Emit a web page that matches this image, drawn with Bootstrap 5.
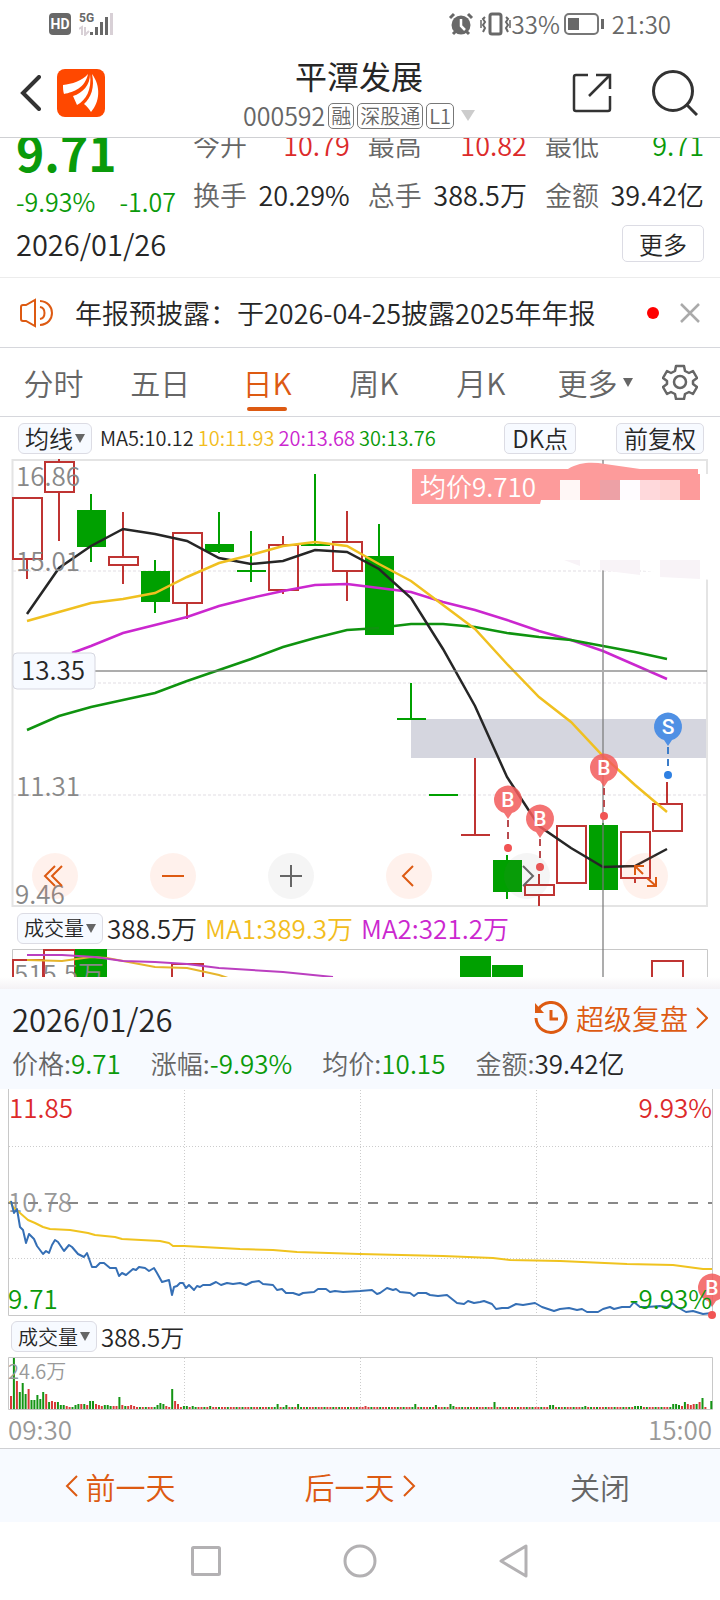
<!DOCTYPE html>
<html lang="zh-CN">
<head>
<meta charset="utf-8">
<meta name="viewport" content="width=device-width, initial-scale=1">
<title>平潭发展 000592</title>
<link href="https://cdn.jsdelivr.net/npm/bootstrap@5.3.0/dist/css/bootstrap.min.css" rel="stylesheet">
<style>
  :root { --up:#dc2a2a; --down:#0a9a0a; --brand:#dd5a12; --ink:#262626; --muted-ink:#666; --line:#d6d7dc; --tint:#f7faff; }
  body { font-family:"Noto Sans CJK SC",sans-serif; font-weight:350; color:var(--ink); background:#fff; line-height:1; overflow-x:hidden; }
  button, select { font-family:inherit; font-weight:inherit; color:inherit; }
  svg { display:block; flex:none; }
  .plain { border:0; background:none; padding:0; }
  .c-up { color:var(--up); } .c-down { color:var(--down); } .c-brand { color:var(--brand); } .c-muted { color:var(--muted-ink); }
  .c-y { color:#f2bd1d; } .c-m { color:#cb27cf; }
  .f20 { font-size:20px; } .f24 { font-size:24px; } .f25 { font-size:25px; } .f26 { font-size:26px; } .f27 { font-size:27px; } .f28 { font-size:28px; } .f29 { font-size:29px; } .f30 { font-size:30px; } .f31 { font-size:31px; } .f32 { font-size:32px; }
  .statusbar { height:48px; padding:0 49px; color:#686868; }
  .topbar { height:90px; padding:0 22px 0 20px; border-bottom:1px solid #cfd0d3; }
  .topbar .side { width:136px; }
  .tagbox { font-size:20px; border:1px solid #777; border-radius:5px; height:26px; padding:0 2px; line-height:23px; }
  .quote { height:140px; overflow:hidden; padding:0 16px; border-bottom:1px solid #ececec; }
  .quote-top { height:83px; gap:17px; }
  .quote-left { width:160px; }
  .price { font-size:48px; font-weight:700; line-height:48px; margin-top:-11px; margin-bottom:14px; }
  .quote-grid { font-size:27px; line-height:50px; margin-top:-18px; gap:0 18px; }
  .chip { border:1px solid #dcdce4; border-radius:5px; background:var(--tint); height:31px; padding:0 7px; line-height:26px; white-space:nowrap; }
  .chips { gap:40px; }
  .more { width:82px; height:37px; background:#fff; border-radius:5px; }
  .notice { height:70px; padding:0 19px; gap:20px; border-bottom:1px solid var(--line); }
  .periods { height:69px; border-bottom:1px solid var(--line); color:var(--muted-ink); }
  .periods .plain { height:68px; }
  .periods .active { color:var(--brand); position:relative; }
  .periods .active::after { content:""; position:absolute; left:50%; margin-left:-20px; bottom:5px; width:40px; height:4px; border-radius:2px; background:var(--brand); }
  .gear { width:79px; }
  .caret-mark { position:absolute; left:100%; top:50%; margin-left:5px; margin-top:-4px; }
  .ma-row { height:42px; padding:0 16px 0 18px; }
  select.pick { -webkit-appearance:none; appearance:none; border:1px solid #dcdce4; border-radius:6px; height:31px; padding:0 18px 0 6px; line-height:26px;
    background:var(--tint) url("data:image/svg+xml,%3Csvg xmlns='http://www.w3.org/2000/svg' viewBox='0 0 10 9'%3E%3Cpath d='M0 0h10L5 9z' fill='%23666'/%3E%3C/svg%3E") no-repeat right 6px center/10px 9px; }
  .chart { width:100%; height:auto; overflow:visible; }
  .chart text { font-size:26px; }
  .chart .pin { font:500 21px Roboto,sans-serif; fill:#fff; text-anchor:middle; }
  .up rect { fill:none; } .up { stroke:#bf3432; stroke-width:2; }
  .down { stroke:#00a000; stroke-width:2; } .down rect { fill:#00a000; stroke:none; }
  .tools { position:absolute; left:0; right:0; bottom:8px; padding:0 52px 0 32px; }
  .round { width:46px; height:46px; border-radius:50%; background:rgba(255,120,70,.1); color:var(--brand); }
  .round.gray { background:rgba(120,120,120,.07); color:#666; }
  .vol-row { height:42px; padding-left:17px; }
  .edge { height:12px; background:linear-gradient(#fff,#f4f2f5); }
  .sheet-head { height:100px; background:var(--tint); padding:12px 12px 0; }
  .sheet-head .facts { height:40px; gap:30px; }
  .minor-row { height:41px; padding-left:11px; }
  .axis { height:39px; padding:0 8px; color:#999; border-bottom:1px solid #cfd0d3; }
  .chart .small-label { font-size:20px; }
  .actions { height:73px; background:var(--tint); }
  .sysnav { height:78px; gap:122px; padding-right:2px; }
</style>
</head>
<body>

<header>
  <div class="statusbar d-flex align-items-center justify-content-between">
    <div class="d-flex align-items-center gap-2">
      <svg width="22" height="22" viewBox="0 0 22 22"><rect width="22" height="22" rx="4" fill="#686868"/><text x="11" y="16" font-size="14" font-weight="700" text-anchor="middle" fill="#fff" font-family="Roboto,sans-serif">HD</text></svg>
      <svg width="36" height="24" viewBox="0 0 36 24"><text x="0" y="10" font-size="12" font-weight="700" fill="#686868" font-family="Roboto,sans-serif">5G</text><g fill="none" stroke="#d8d0d6" stroke-width="2"><path d="M0 17l3-2v8M6 15v8l4-4"/><path d="M32.500 1v22" stroke-width="3"/></g><path d="M12.500 20v3M17.500 15v8M22.500 10v13M27.500 5v18" stroke="#686868" stroke-width="3" fill="none"/></svg>
    </div>
    <div class="d-flex align-items-center f24">
      <svg class="me-1" width="26" height="24" viewBox="0 0 26 24"><circle cx="13" cy="13" r="9.500" fill="#686868"/><path d="M2 6l4-4M24 6l-4-4M5 22l3-3M21 22l-3-3" stroke="#686868" stroke-width="3"/><path d="M13 7v7l4 4" stroke="#fff" stroke-width="2.500" fill="none"/></svg>
      <svg width="34" height="24" viewBox="0 0 34 24" fill="none" stroke="#686868"><rect x="12" y="2" width="11" height="20" rx="2" stroke-width="3"/><path d="M7 5l-2 2 2 3-2 3 2 3-2 4M28 5l2 2-2 3 2 3-2 3 2 4" stroke-width="2"/><path d="M3 8v8M32 8v8" stroke-width="1.500"/></svg>
      <span>33%</span>
      <svg class="ms-1" width="40" height="22" viewBox="0 0 40 22"><rect x="1" y="1" width="33" height="20" rx="4" fill="none" stroke="#777" stroke-width="2"/><rect x="4" y="5" width="11" height="12" fill="#686868"/><path d="M38.500 6v10" stroke="#686868" stroke-width="3"/></svg>
      <span class="ms-2">21:30</span>
    </div>
  </div>

  <div class="topbar d-flex align-items-center justify-content-between">
    <div class="side d-flex align-items-center">
      <button class="plain me-3" aria-label="返回"><svg width="21" height="36" viewBox="0 0 21 36"><path d="M19 2L3 18l16 16" fill="none" stroke="#333" stroke-width="4" stroke-linecap="round"/></svg></button>
      <svg width="48" height="48" viewBox="0 0 48 48"><rect width="48" height="48" rx="8" fill="#ff4800"/><g fill="#fff"><path d="M31 5C25 12 15 15 6 16c0 3 0 6 1 9 10-2 21-6 24-20z"/><path d="M33 5c0 11-7 19-17 22l4 9c9-5 15-15 13-31z"/><path d="M35 5c3 13-1 24-8 30 3 2 5 5 7 8 9-10 10-26 1-38z"/></g></svg>
    </div>
    <div class="text-center">
      <h1 class="f32 fw-normal mb-2">平潭发展</h1>
      <div class="d-flex align-items-center c-muted f25" style="gap:3px">
        <span>000592</span><span class="tagbox">融</span><span class="tagbox">深股通</span><span class="tagbox">L1</span>
        <svg class="ms-1" width="14" height="11" viewBox="0 0 14 11"><path d="M0 0h14L7 11z" fill="#ccc"/></svg>
      </div>
    </div>
    <div class="side d-flex align-items-center justify-content-end gap-4">
      <button class="plain me-3" aria-label="分享"><svg width="40" height="40" viewBox="0 0 40 40" fill="none" stroke="#333" stroke-width="2.500"><path d="M16 2H4a2 2 0 0 0-2 2v32a2 2 0 0 0 2 2h32a2 2 0 0 0 2-2V23M24 2h14v14M38 2L17 23"/></svg></button>
      <button class="plain" aria-label="搜索"><svg width="46" height="46" viewBox="0 0 46 46" fill="none" stroke="#333" stroke-width="3"><circle cx="21" cy="21" r="19.500"/><path d="M34 34l11 11"/></svg></button>
    </div>
  </div>
</header>

<main>
  <section class="quote">
    <div class="quote-top d-flex">
      <div class="quote-left">
        <div class="price c-down">9.71</div>
        <div class="d-flex justify-content-between c-down f25"><span>-9.93%</span><span>-1.07</span></div>
      </div>
      <div class="quote-grid d-flex flex-fill">
        <div class="flex-fill">
          <div class="d-flex justify-content-between"><span class="c-muted">今开</span><span class="c-up">10.79</span></div>
          <div class="d-flex justify-content-between"><span class="c-muted">换手</span><span>20.29%</span></div>
        </div>
        <div class="flex-fill">
          <div class="d-flex justify-content-between"><span class="c-muted">最高</span><span class="c-up">10.82</span></div>
          <div class="d-flex justify-content-between"><span class="c-muted">总手</span><span>388.5万</span></div>
        </div>
        <div class="flex-fill">
          <div class="d-flex justify-content-between"><span class="c-muted">最低</span><span class="c-down">9.71</span></div>
          <div class="d-flex justify-content-between"><span class="c-muted">金额</span><span>39.42亿</span></div>
        </div>
      </div>
    </div>
    <div class="d-flex justify-content-between align-items-center pt-1">
      <span class="f29">2026/01/26</span><button class="chip more f24">更多</button>
    </div>
  </section>

  <section class="notice d-flex align-items-center">
    <svg width="36" height="30" viewBox="0 0 36 30" fill="none" stroke="#dd5a12" stroke-width="2"><path d="M16 2v26l-9-5H4a2 2 0 0 1-2-2V9a2 2 0 0 1 2-2h3zM21 9c6 1 6 11 0 12M21 3c16 1 16 23 0 24"/></svg>
    <span class="f27 flex-fill text-nowrap">年报预披露：于2026-04-25披露2025年年报</span>
    <svg width="12" height="12"><circle cx="6" cy="6" r="6" fill="#f00"/></svg>
    <button class="plain" aria-label="关闭提示"><svg width="22" height="22" viewBox="0 0 22 22"><path d="M2 2l18 18M20 2L2 20" stroke="#aaa" stroke-width="2.500"/></svg></button>
  </section>

  <nav class="periods d-flex f30">
    <button class="plain col">分时</button><button class="plain col">五日</button><button class="plain col active">日K</button><button class="plain col">周K</button><button class="plain col">月K</button>
    <button class="plain col"><span class="position-relative">更多<svg class="caret-mark" width="10" height="9" viewBox="0 0 10 9"><path d="M0 0h10L5 9z" fill="#666"/></svg></span></button>
    <button class="plain gear d-flex align-items-center justify-content-center" aria-label="设置"><svg width="36" height="36" viewBox="0 0 36 36" fill="none" stroke="#666" stroke-width="2.500" stroke-linejoin="round"><path d="M14 2h8l1 5 4 2 4-2 4 7-4 3v3l4 3-4 7-4-2-4 2-1 5h-8l-1-5-4-2-4 2-4-7 4-3v-3l-4-3 4-7 4 2 4-2z"/><circle cx="18" cy="18" r="6"/></svg></button>
  </nav>

  <div class="ma-row d-flex align-items-center f20">
    <select class="pick f24" aria-label="指标"><option>均线</option></select>
    <div class="d-flex flex-fill gap-1 ps-2 text-nowrap"><span>MA5:10.12</span><span class="c-y">10:11.93</span><span class="c-m">20:13.68</span><span class="c-down">30:13.76</span></div>
    <div class="chips d-flex"><button class="chip f24">DK点</button><button class="chip f24">前复权</button></div>
  </div>

  <section>
    <div class="position-relative">
      <svg class="chart" viewBox="0 0 720 448">
        <rect x="411" y="260" width="296" height="39" fill="#d5d6df"/>
        <g fill="none" stroke="#f0eef1" stroke-width="2" stroke-dasharray="3 2"><path d="M13 112H707M13 224H707M13 336H707"/></g>
        <path d="M12.500 1H707V447H12.500z" fill="none" stroke="#e4e4e4" stroke-width="2"/>
        <g class="up">
          <rect x="13" y="39" width="29" height="61"/><path d="M27 100v20"/>
          <rect x="45" y="3" width="29" height="30"/><path d="M59 0v3M59 33v49"/>
          <rect x="109" y="98" width="29" height="8"/><path d="M123 53v45M123 106v19"/>
          <rect x="173" y="74" width="29" height="70"/><path d="M187 144v16"/>
          <rect x="269" y="86" width="29" height="45"/><path d="M283 77v9M283 131v4"/>
          <rect x="333" y="83" width="29" height="29"/><path d="M347 52v31M347 112v30"/>
          <path d="M475 299v77M461 376h29"/>
          <rect x="525" y="426" width="29" height="10"/><path d="M539 415v11M539 436v11"/>
          <rect x="557" y="367" width="29" height="57"/>
          <rect x="621" y="373" width="29" height="46"/><path d="M635 419v5"/>
          <rect x="653" y="345" width="29" height="27"/><path d="M667 323v22"/>
        </g>
        <g class="down">
          <rect x="77" y="51" width="29" height="37"/><path d="M91 35v68"/>
          <rect x="141" y="112" width="29" height="31"/><path d="M155 101v53"/>
          <rect x="205" y="85" width="29" height="8"/><path d="M219 53v41"/>
          <path d="M251 72v51M237 112h29M315 15v71M301 86h29M379 65v32M411 224v36M397 260h29M429 336h29"/>
          <rect x="365" y="97" width="29" height="79"/>
          <rect x="493" y="401" width="29" height="32"/><path d="M507 396v44"/>
          <rect x="589" y="366" width="29" height="65"/><path d="M603 364v3"/>
        </g>
        <g fill="none" stroke-width="2.500">
          <polyline stroke="#cb27cf" points="72,194 91,187 123,174 155,166 187,158 219,147 251,139 283,132 315,126 347,125 379,129 411,133 443,143 475,151 507,161 539,172 571,181 603,192 635,206 667,220"/>
          <polyline stroke="#0f930f" points="27,271 59,257 91,248 123,241 155,234 187,222 219,211 251,200 283,188 315,179 347,171 379,169"/>
          <polyline stroke="#0f930f" points="394,167 411,165 443,165 475,168 507,174 539,178 571,181 603,187 635,193 667,200"/>
          <polyline stroke="#262626" points="27,155 59,109 91,87 123,70 155,75 187,82 219,99 251,105 283,102 315,91 347,93 379,110 411,139 443,190 475,247 507,318 539,367 571,389 603,408 635,407 667,390"/>
          <polyline stroke="#f0c020" points="27,162 59,153 91,144 123,140 155,134 187,118 219,104 251,96 283,87 315,83 347,87 379,105 411,122 443,146 475,170 507,205 539,238 571,263 603,297 635,326 667,353"/>
        </g>
        <g fill="#888"><text x="16" y="27">16.86</text><text x="16" y="112">15.01</text><text x="16" y="337">11.31</text><text x="15" y="445">9.46</text></g>
        <path d="M95 212H707M603 1V518" stroke="#777" stroke-opacity=".6" stroke-width="2"/>
        <rect x="13" y="194" width="82" height="36" rx="4" fill="#f7faff" stroke="#d6d7e0"/>
        <text x="21" y="221" fill="#262626">13.35</text>
        <path d="M541 41L560 15H710V121L640 111H580L541 90z" fill="#fff"/>
        <path d="M412 10H568C580 3 592 3 605 5L640 10H698V15H700V41H541L540 45H412z" fill="#fd9b9b"/>
        <path d="M560 21h20v20h-20z" fill="#fff7f6"/><path d="M600 21h20v20h-20z" fill="#eda1a6"/><path d="M620 21h20v20h-20z" fill="#fffcff"/><path d="M640 21h20v20h-20z" fill="#ffd9dc"/><path d="M660 21h20v20h-20z" fill="#ffd3d3"/>
        <path d="M564 101h16v6zM600 101h40v15l-40-5zM660 101h40v19l-40-2z" fill="#f8f3f7"/>
        <text x="420" y="38" fill="#fff">均价9.710</text>
        <g fill="none" stroke-width="2" stroke-dasharray="7 5"><path d="M508 361v26M540 380v26M604 329v26" stroke="#b84a4e"/><path d="M668 288v26" stroke="#3c7cc8"/></g>
        <g fill="#f15454"><circle cx="508" cy="389" r="4"/><circle cx="540" cy="408" r="4"/><circle cx="604" cy="357" r="4"/></g><circle cx="668" cy="316" r="4" fill="#2f80e2"/>
        <g fill="#f25c5c" fill-opacity=".86">
          <path d="M508 360l-4-6a14 14 0 1 1 8 0z"/><path d="M540 379l-4-6a14 14 0 1 1 8 0z"/><path d="M604 328l-4-6a14 14 0 1 1 8 0z"/>
        </g>
        <path d="M668 287l-4-6a14 14 0 1 1 8 0z" fill="#4f90e4"/>
        <text class="pin" x="508" y="348">B</text><text class="pin" x="540" y="367">B</text><text class="pin" x="604" y="316">B</text><text class="pin" x="668" y="275">S</text>
      </svg>
      <div class="tools d-flex justify-content-between">
        <button class="plain round" aria-label="最早"><svg width="46" height="46" fill="none" stroke="currentColor" stroke-width="2"><path d="M23 13L13 23l10 10M30 13L20 23l10 10"/></svg></button>
        <button class="plain round" aria-label="缩小"><svg width="46" height="46" stroke="currentColor" stroke-width="2"><path d="M12 23h22"/></svg></button>
        <button class="plain round gray" aria-label="放大"><svg width="46" height="46" stroke="currentColor" stroke-width="2"><path d="M12 23h22M23 12v22"/></svg></button>
        <button class="plain round" aria-label="左移"><svg width="46" height="46" fill="none" stroke="currentColor" stroke-width="2"><path d="M27 13L17 23l10 10"/></svg></button>
        <button class="plain round gray" aria-label="右移"><svg width="46" height="46" fill="none" stroke="currentColor" stroke-width="2"><path d="M19 13l10 10-10 10"/></svg></button>
        <button class="plain round" aria-label="全屏"><svg width="46" height="46" fill="none" stroke="currentColor" stroke-width="2"><path d="M13 22v-9h9M13 13l8 8M25 25l9 8M34 24v9h-9"/></svg></button>
      </div>
    </div>
    <div class="vol-row d-flex align-items-center f26 gap-2">
      <div class="d-flex align-items-center gap-1"><select class="pick f20" aria-label="副图指标"><option>成交量</option></select><span>388.5万</span></div>
      <span class="c-y">MA1:389.3万</span><span class="c-m">MA2:321.2万</span>
    </div>
    <svg class="chart overflow-hidden" viewBox="0 0 720 28">
      <path d="M12.500 28V.5H707.500V28" fill="none" stroke="#c8c8c8"/>
      <g class="up" fill="none"><path d="M13 28V11H43V28M44 28V1H75V28M172 28V15H203V28M652 28V12H683V28"/></g>
      <path d="M75 0h32v28H75zM460 7h31v21h-31zM492 16h31v12h-31z" fill="#00a000"/>
      <g fill="none" stroke-width="2"><polyline stroke="#e6b52c" points="27,11 62,12 91,8 107,9 123,12 155,18 187,19 219,26 228,29"/><polyline stroke="#bb3fc0" points="27,6 62,6 95,8 123,12 155,13 187,15 219,19 283,23 333,28"/></g>
      <text x="14" y="35" fill="#888">515.5万</text>
    </svg>
  </section>

  <div class="edge"></div>

  <section>
    <div class="sheet-head">
      <div class="d-flex justify-content-between align-items-center">
        <span class="f31">2026/01/26</span>
        <a href="#" class="c-brand text-decoration-none d-flex align-items-center f28">
          <svg class="me-2" width="34" height="34" viewBox="0 0 34 34" fill="none" stroke="currentColor" stroke-width="3"><path d="M4 9A15 15 0 1 1 2 17M17 9v9h7"/><path d="M1 2v10h9z" fill="currentColor" stroke="none"/></svg>
          超级复盘
          <svg class="ms-2" width="12" height="22" fill="none" stroke="currentColor" stroke-width="2"><path d="M1 1l10 10L1 21"/></svg>
        </a>
      </div>
      <div class="facts d-flex align-items-center f26 text-nowrap pt-2 mt-1">
        <span><span class="c-muted">价格:</span><span class="c-down">9.71</span></span>
        <span><span class="c-muted">涨幅:</span><span class="c-down">-9.93%</span></span>
        <span><span class="c-muted">均价:</span><span class="c-down">10.15</span></span>
        <span><span class="c-muted">金额:</span><span>39.42亿</span></span>
      </div>
    </div>
    <svg class="chart" viewBox="0 0 720 227">
      <path d="M184.500 1V226M360.500 1V226M536.500 1V226M9 57.500H712M9 169.500H712" fill="none" stroke="#ccc" stroke-dasharray="1 2"/>
      <path d="M8.500 0V226.500H712.500V0" fill="none" stroke="#c8c8c8"/>
      <g fill="#999"><text x="8" y="123">10.78</text></g>
      <path d="M8 114H712" stroke="#888" stroke-width="2" stroke-dasharray="10 10"/>
      <g fill="none" stroke-width="2" stroke-linejoin="round">
        <polyline stroke="#f0c31f" points="10,112 13,118 20,124 28,131 35,134 43,138 50,140 70,141 88,144 95,146 115,148 122,150 160,152 169,154 173,157 184,157 240,160 273,161 297,163 360,165 443,167 493,169 510,171 560,172 627,175 673,176 703,180 712,180"/>
        <polyline stroke="#356fb5" points="11,112 14,124 17,120 20,138 23,141 26,154 29,145 34,150 37,157 43,165 46,162 49,164 52,156 55,151 58,153 64,162 69,156 72,158 78,165 84,168 87,164 92,178 96,178 100,174 104,174 110,179 116,179 119,187 122,184 126,186 133,180 136,181 139,178 145,179 149,182 154,179 157,184 162,193 169,191 172,206 174,198 177,197 180,194 183,194 186,199 189,196 194,201 197,197 200,198 203,196 210,196 216,193 221,196 227,194 233,195 240,194 246,196 252,193 259,192 263,195 273,196 277,201 282,200 286,204 293,204 299,206 303,204 314,203 318,200 326,200 330,203 335,202 343,203 360,202 372,201 377,205 380,204 387,199 393,201 396,200 400,203 410,204 414,207 418,204 426,204 430,206 438,207 447,206 457,214 464,215 468,212 474,214 480,213 484,212 492,215 496,220 502,219 508,219 516,215 523,216 535,214 542,218 554,222 560,220 569,219 577,221 582,220 587,223 598,223 603,220 610,218 614,220 622,218 630,218 634,213 640,218 647,218 660,217 667,218 672,214 677,218 686,223 693,222 703,225 712,224"/>
      </g>
      <path d="M712 218l-4-6a14 14 0 1 1 8 0z" fill="#f25c5c" fill-opacity=".86"/><circle cx="712" cy="226" r="4" fill="#f15454"/>
      <text class="pin" x="712" y="206">B</text>
      <g fill="#dc2a2a"><text x="9" y="29">11.85</text><text x="712" y="29" text-anchor="end">9.93%</text></g>
      <g fill="#0a9a0a"><text x="8" y="220">9.71</text><text x="712" y="220" text-anchor="end">-9.93%</text></g>
    </svg>
    <div class="minor-row d-flex align-items-center gap-1 f24">
      <select class="pick f20" aria-label="分时副图指标"><option>成交量</option></select><span>388.5万</span>
    </div>
    <svg class="chart" viewBox="0 0 720 53">
      <path d="M184.500 1V52M360.500 1V52M536.500 1V52" stroke="#ccc" stroke-dasharray="1 2"/>
      <path d="M8.500 .5H712.500V52.500H8.500z" fill="none" stroke="#c8c8c8"/>
      <g id="bars"></g>
      <text class="small-label" x="8" y="22" fill="#999">24.6万</text>
    </svg>
    <div class="axis d-flex justify-content-between align-items-center f26"><span>09:30</span><span>15:00</span></div>
  </section>
</main>

<footer>
  <div class="actions d-flex f30 c-brand">
    <button class="plain col d-flex align-items-center justify-content-center gap-2"><svg width="13" height="22" fill="none" stroke="currentColor" stroke-width="2"><path d="M12 1L2 11l10 10"/></svg>前一天</button>
    <button class="plain col d-flex align-items-center justify-content-center gap-2">后一天<svg width="13" height="22" fill="none" stroke="currentColor" stroke-width="2"><path d="M1 1l10 10L1 21"/></svg></button>
    <button class="plain col c-muted">关闭</button>
  </div>
  <div class="sysnav d-flex align-items-center justify-content-center">
    <button class="plain" aria-label="最近任务"><svg width="30" height="30" fill="none" stroke="#b3b1b3" stroke-width="3"><rect x="1.500" y="1.500" width="27" height="27" rx="1"/></svg></button>
    <button class="plain" aria-label="主屏幕"><svg width="34" height="34" fill="none" stroke="#b3b1b3" stroke-width="3"><circle cx="17" cy="17" r="15"/></svg></button>
    <button class="plain" aria-label="返回上级"><svg width="29" height="34" fill="none" stroke="#b3b1b3" stroke-width="3" stroke-linejoin="round"><path d="M27 2v30L2 17z"/></svg></button>
  </div>
</footer>

<script src="https://cdn.jsdelivr.net/npm/bootstrap@5.3.0/dist/js/bootstrap.bundle.min.js"></script>
<script>
  // Minute volume: opening minutes in order, then the minutes that stand out; quiet minutes are 2 high.
  const opening = '13r 51g 28r 17g 26g 15g 20r 9g 9g 14g 10g 17g 15r 7g 8r 7r 7g 4g 4g 3r 2r 2g 4g 5g 5r 5g 4r 8g 8g 5r 4r 3r 4g 4g 3g 3r 3r 12g 4r 3g 3r 4r 3r'.split(' ');
  const peaks = {50:'4g',51:'6g',52:'5g',53:'3r',55:'20g',56:'8r',57:'5r',59:'3g',60:'3g',62:'3g',68:'3g',91:'5g',94:'4g',98:'5g',121:'3r',138:'5g',145:'4g',150:'5g',151:'3g',165:'7g',184:'4g',185:'4g',196:'3g',213:'3g',214:'3g',215:'3g',226:'5g',227:'5g',228:'4g',229:'3r',230:'7g',231:'5r',232:'4r',233:'5r',234:'5g',235:'7r',236:'11g',237:'2r',238:'0r',239:'8g'};
  let out = '';
  for (let i = 0; i < 240; i++) {
    const v = opening[i] || peaks[i] || (i * 7 % 11 < 4 ? '2g' : '2r');
    const h = parseInt(v);
    out += `<rect x="${(10 + i * 2.93).toFixed(1)}" y="${52 - h}" width="2" height="${h}" fill="${v.endsWith('g') ? '#149414' : '#d93a3a'}"/>`;
  }
  document.getElementById('bars').innerHTML = out;
</script>
</body>
</html>
